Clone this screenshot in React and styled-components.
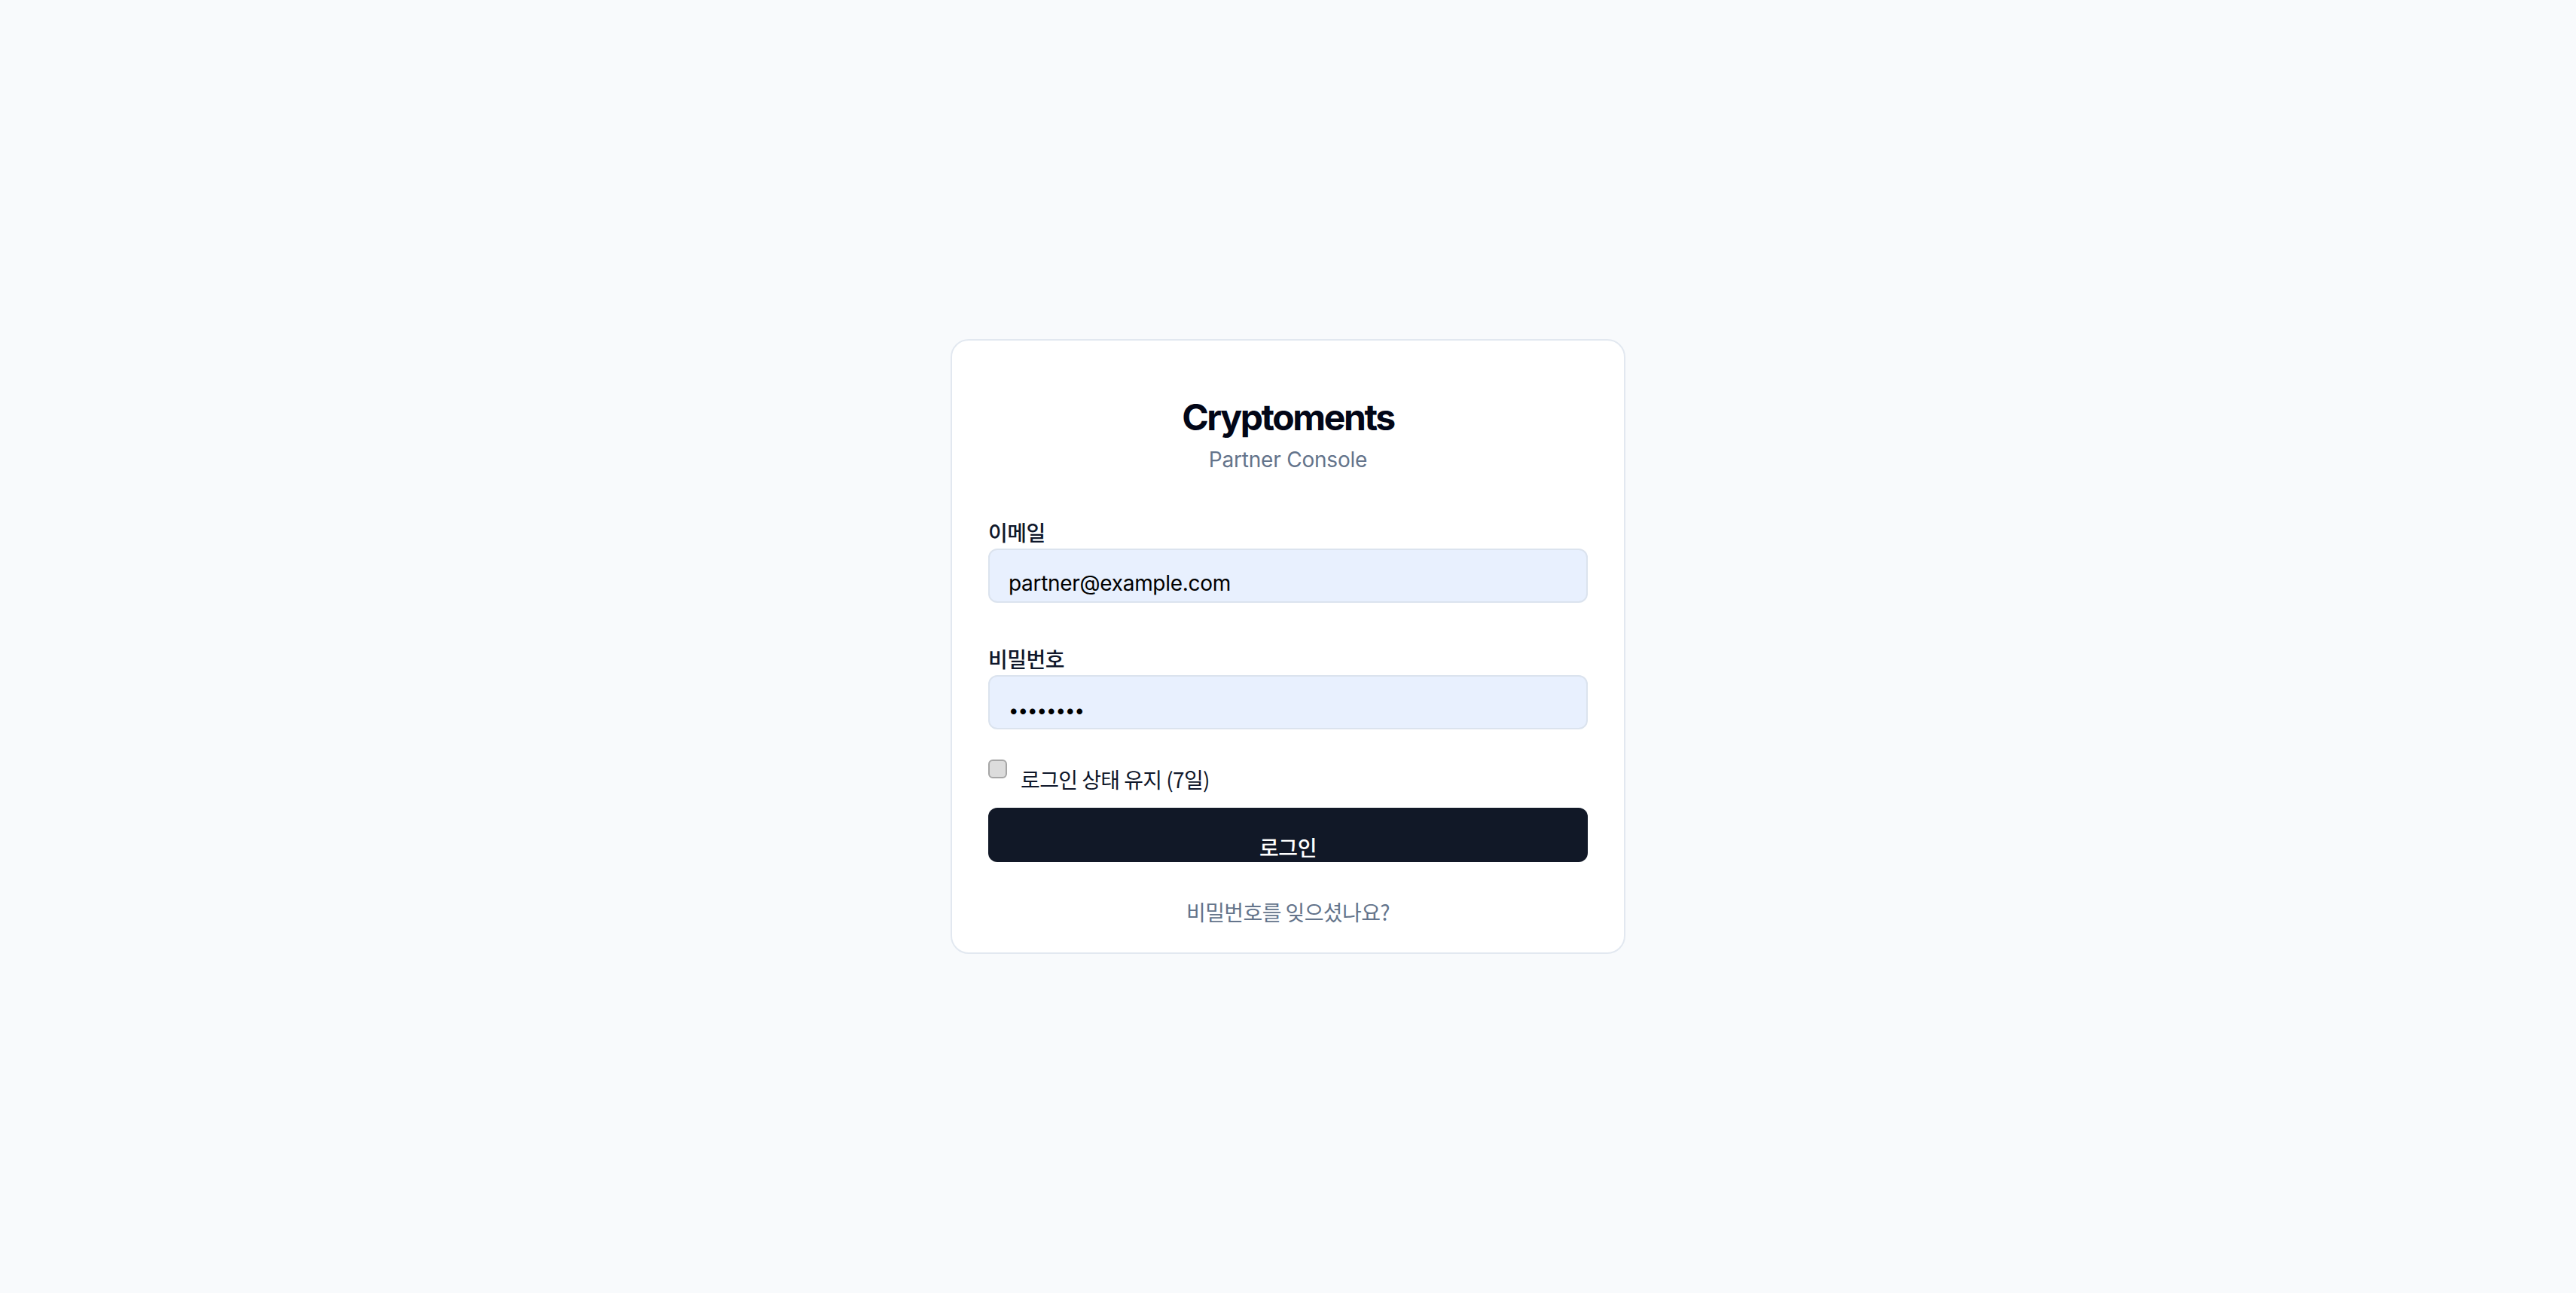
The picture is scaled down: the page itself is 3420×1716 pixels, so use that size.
import React from "react";
import styled, { createGlobalStyle } from "styled-components";

const GlobalStyle = createGlobalStyle`
  html, body {
    margin: 0;
    padding: 0;
    background: #f8fafc;
  }
  * {
    box-sizing: border-box;
  }
  body {
    font-family: "Inter", "Noto Sans CJK KR", sans-serif;
    color: #0f172a;
  }
`;

const KOREAN = `"Noto Sans CJK KR", "Inter", sans-serif`;

const LoginPage = () => {
  return (
    <Page>
      <Card>
        <Header>
          <Title>Cryptoments</Title>
          <Subtitle>Partner Console</Subtitle>
        </Header>
        <Form onSubmit={(e) => e.preventDefault()}>
          <Field>
            <Label htmlFor="email">이메일</Label>
            <Input id="email" type="email" defaultValue="partner@example.com" />
          </Field>
          <Field $gap>
            <Label htmlFor="password">비밀번호</Label>
            <Input id="password" type="password" defaultValue="password" $secret />
          </Field>
          <RememberRow>
            <Checkbox type="checkbox" id="remember" />
            <RememberText htmlFor="remember">로그인 상태 유지 (7일)</RememberText>
          </RememberRow>
          <SubmitBtn type="submit">로그인</SubmitBtn>
        </Form>
        <ForgotLink href="#">비밀번호를 잊으셨나요?</ForgotLink>
      </Card>
    </Page>
  );
};

export default function App() {
  return (
    <>
      <GlobalStyle />
      <LoginPage />
    </>
  );
}

const Page = styled.main`
  min-height: 100vh;
  display: flex;
  align-items: center;
  justify-content: center;
`;

const Card = styled.div`
  width: 896px;
  background: #ffffff;
  border: 2px solid #e2e8f0;
  border-radius: 24px;
  padding: 70px 48px 34px;
  display: flex;
  flex-direction: column;
`;

const Header = styled.div`
  text-align: center;
  margin-bottom: 56px;
`;

const Title = styled.h1`
  margin: 0;
  font-family: "Inter", sans-serif;
  font-size: 48px;
  line-height: 64px;
  font-weight: 700;
  letter-spacing: -2.4px;
  color: #020617;
`;

const Subtitle = styled.p`
  margin: 4px 0 0;
  font-family: "Inter", sans-serif;
  font-size: 28px;
  line-height: 40px;
  letter-spacing: -0.2px;
  color: #64748b;
`;

const Form = styled.form`
  display: flex;
  flex-direction: column;
`;

const Field = styled.div`
  display: flex;
  flex-direction: column;
  margin-top: ${(p) => (p.$gap ? "54px" : "0")};
`;

const Label = styled.label`
  font-family: ${KOREAN};
  font-size: 28px;
  line-height: 40px;
  font-weight: 500;
  letter-spacing: -0.5px;
  color: #0f172a;
  margin-bottom: 2px;
`;

const Input = styled.input`
  width: 100%;
  height: 72px;
  border: 2px solid #dbe3ee;
  border-radius: 12px;
  background: #e8f0fe;
  padding: 24px 24px 4px 25px;
  font-family: "Inter", sans-serif;
  font-size: ${(p) => (p.$secret ? "24px" : "28px")};
  line-height: 40px;
  letter-spacing: ${(p) => (p.$secret ? "-1px" : "-0.3px")};
  color: #000000;
  outline: none;
`;

const RememberRow = styled.div`
  display: flex;
  align-items: flex-start;
  margin-top: 40px;
`;

const Checkbox = styled.input`
  appearance: none;
  margin: 0;
  width: 25px;
  height: 25px;
  background: #dcdcdc;
  border: 2px solid #a6a6a6;
  border-radius: 6px;
  flex-shrink: 0;
`;

const RememberText = styled.label`
  margin-left: 18px;
  margin-top: 6px;
  font-family: ${KOREAN};
  font-size: 28px;
  line-height: 40px;
  letter-spacing: -0.6px;
  color: #0f172a;
`;

const SubmitBtn = styled.button`
  margin-top: 18px;
  height: 72px;
  width: 100%;
  border: none;
  border-radius: 12px;
  background: #111827;
  color: #ffffff;
  padding: 32px 0 0;
  font-family: ${KOREAN};
  font-size: 28px;
  line-height: 40px;
  font-weight: 500;
  letter-spacing: -0.5px;
  cursor: pointer;
`;

const ForgotLink = styled.a`
  margin-top: 46px;
  align-self: center;
  font-family: ${KOREAN};
  font-size: 28px;
  line-height: 40px;
  letter-spacing: -0.6px;
  color: #64748b;
  text-decoration: none;
`;
